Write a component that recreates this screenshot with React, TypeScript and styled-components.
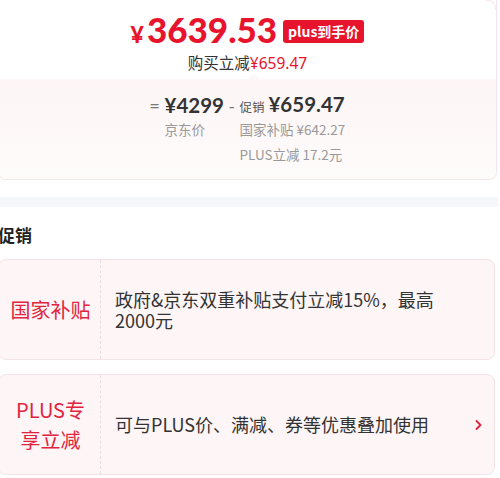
import React from 'react';
import styled, { createGlobalStyle } from 'styled-components';

const GlobalStyle = createGlobalStyle`
  html, body {
    margin: 0;
    padding: 0;
    background: #ffffff;
    font-family: "Noto Sans CJK SC", "Noto Sans", sans-serif;
    color: #333333;
  }
`;

const Page = styled.div`
  width: 500px;
  height: 478px;
  overflow: hidden;
  background: #ffffff;
`;

const Shift = styled.div`
  margin-left: -2px;
  width: 500px;
`;

const PriceCard = styled.div`
  border: 1px solid #f6e6ea;
  border-top: none;
  border-radius: 0 0 8px 8px;
  margin-right: 1px;
  overflow: hidden;
  position: relative;
`;

const Corner = styled.div`
  position: absolute;
  right: 0;
  top: 0;
  width: 10px;
  height: 10px;
  border-top: 1px solid #f6e6ea;
  border-right: 1px solid #f6e6ea;
  border-top-right-radius: 8px;
  box-sizing: border-box;
`;

const Head = styled.div`
  display: flex;
  flex-direction: column;
  align-items: center;
  padding-top: 11px;
  height: 79px;
  box-sizing: border-box;
`;

const PriceLine = styled.div`
  display: flex;
  align-items: center;
  gap: 6px;
  height: 40px;
`;

const BigPrice = styled.span`
  color: #e8132d;
  font-family: "Lato", "Noto Sans", sans-serif;
  font-weight: 900;
  font-size: 35px;
  line-height: 40px;
`;

const Yen = styled.span`
  font-size: 23px;
  margin-right: 3px;
`;

const PlusBadge = styled.span`
  background: #e8132d;
  color: #ffffff;
  font-weight: 700;
  font-size: 14px;
  line-height: 23px;
  padding: 0 5px;
  border-radius: 3px;
  margin-top: 1px;
`;

const SaveLine = styled.div`
  font-size: 15.5px;
  line-height: 22px;
  color: #333333;
`;

const Red = styled.span`
  color: #e8132d;
  font-family: "Noto Sans", sans-serif;
`;

const Breakdown = styled.div`
  position: relative;
  background: linear-gradient(180deg, #fdf5f6 0%, #fefbfb 100%);
  padding: 14px 0 12px;
  display: flex;
  justify-content: center;
`;

const Notch = styled.div`
  position: absolute;
  top: -5px;
  left: 249px;
  width: 0;
  height: 0;
  border-left: 6px solid transparent;
  border-right: 6px solid transparent;
  border-bottom: 5px solid #fdf5f6;
`;

const Grid = styled.div`
  display: grid;
  grid-template-columns: auto auto auto auto;
  grid-template-rows: 24px 25px 25px;
  column-gap: 5px;
  align-items: center;
`;

const Op = styled.span`
  color: #777777;
  font-size: 17px;
  font-family: "Noto Sans", sans-serif;
`;

const Amount = styled.span`
  display: flex;
  align-items: baseline;
  color: #333333;
  font-family: "Lato", "Noto Sans", sans-serif;
  font-weight: 700;
  font-size: 20.5px;
  line-height: 24px;
`;

const Small = styled.span`
  color: #555555;
  font-size: 12.5px;
  margin-right: 4px;
  font-weight: 400;
  font-family: "Noto Sans CJK SC", sans-serif;
`;

const Note = styled.span`
  color: #999999;
  font-size: 13.5px;
  line-height: 25px;
  font-family: "Noto Sans CJK SC", sans-serif;
  white-space: nowrap;
`;

const Band = styled.div`
  margin-top: 17px;
  height: 10px;
  background: #f6f7fb;
`;

const Title = styled.div`
  font-size: 17px;
  font-weight: 700;
  color: #222222;
  line-height: 24px;
  margin-top: 16px;
`;

const PromoList = styled.div`
  display: flex;
  flex-direction: column;
  gap: 14px;
  margin-top: 12px;
  margin-right: 3px;
`;

const Promo = styled.div`
  display: flex;
  align-items: stretch;
  height: 101px;
  border: 1px solid #f6e1e6;
  border-radius: 8px;
  background: #fdf5f6;
  box-sizing: border-box;
`;

const Label = styled.div`
  width: 99px;
  flex-shrink: 0;
  display: flex;
  align-items: center;
  justify-content: center;
  text-align: center;
  color: #e2233e;
  font-size: 20px;
  line-height: 30px;
  border-right: 1px dashed #ecdadf;
  padding-left: 2px;
`;

const Desc = styled.div`
  flex: 1;
  display: flex;
  align-items: center;
  padding: 0 11px 0 14px;
  font-size: 18px;
  line-height: 21px;
  color: #333333;
`;

const DescText = styled.div`
  max-width: 322px;
`;

const Chevron = styled.svg`
  flex-shrink: 0;
  margin-left: auto;
`;

export default function App() {
  return (
    <Page>
      <GlobalStyle />
      <Shift>
        <PriceCard>
          <Corner />
          <Head>
            <PriceLine>
              <BigPrice>
                <Yen>¥</Yen>3639.53
              </BigPrice>
              <PlusBadge>plus到手价</PlusBadge>
            </PriceLine>
            <SaveLine>
              购买立减<Red>¥659.47</Red>
            </SaveLine>
          </Head>
          <Breakdown>
            <Notch />
            <Grid>
              <Op>=</Op>
              <Amount>¥4299</Amount>
              <Op>-</Op>
              <Amount>
                <Small>促销</Small>¥659.47
              </Amount>
              <span />
              <Note>京东价</Note>
              <span />
              <Note>国家补贴 ¥642.27</Note>
              <span />
              <span />
              <span />
              <Note>PLUS立减 17.2元</Note>
            </Grid>
          </Breakdown>
        </PriceCard>
        <Band />
        <Title>促销</Title>
        <PromoList>
          <Promo>
            <Label>国家补贴</Label>
            <Desc>
              <DescText>政府&amp;京东双重补贴支付立减15%，最高2000元</DescText>
            </Desc>
          </Promo>
          <Promo>
            <Label>
              PLUS专
              <br />
              享立减
            </Label>
            <Desc>
              <DescText>可与PLUS价、满减、券等优惠叠加使用</DescText>
              <Chevron width="10" height="14" viewBox="0 0 10 14">
                <path d="M3.5 3 L7.5 7 L3.5 11" fill="none" stroke="#e2233e" strokeWidth="1.8" strokeLinecap="round" strokeLinejoin="round" />
              </Chevron>
            </Desc>
          </Promo>
        </PromoList>
      </Shift>
    </Page>
  );
}
